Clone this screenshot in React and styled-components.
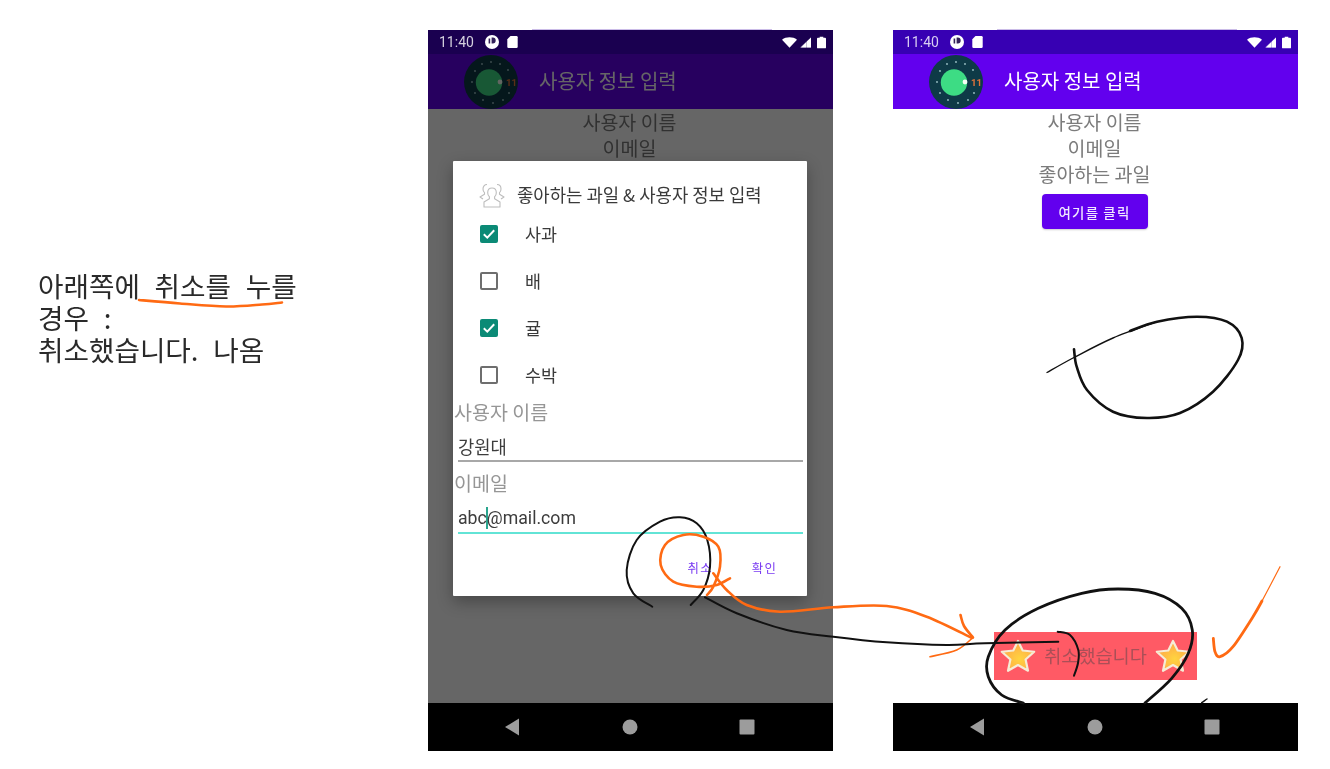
import React from 'react';
import styled, { createGlobalStyle } from 'styled-components';

const KR = '"Noto Sans CJK KR", "Noto Sans", sans-serif';

const Global = createGlobalStyle`
  html, body { margin: 0; background: #fff; overflow: hidden; }
  * { box-sizing: border-box; }
`;

const Page = styled.div`
  position: relative;
  display: flex;
  width: 1330px;
  height: 769px;
  padding-top: 30px;
  background: #fff;
  font-family: ${KR};
  filter: blur(0.55px);
`;

const Note = styled.div`
  width: 428px;
  padding: 239px 0 0 38px;
  font-size: 27.7px;
  line-height: 32px;
  word-spacing: 8.5px;
  color: #2a2a2a;
  font-weight: 400;
  white-space: nowrap;
`;

const PhoneRow = styled.div`
  display: flex;
  gap: 60px;
`;

const Phone = styled.section`
  position: relative;
  display: flex;
  flex-direction: column;
  width: 405px;
  height: 721px;
  &::before {
    content: '';
    position: absolute;
    top: -1px;
    left: 104px;
    width: 240px;
    height: 1px;
    background: #cbbce8;
  }
`;

const StatusBar = styled.header`
  display: flex;
  align-items: center;
  height: 24px;
  padding: 0 7px 0 11px;
  background: ${p => (p.$dim ? '#1a0050' : '#3700b3')};
  font-family: Roboto, sans-serif;
  font-size: 14px;
  color: ${p => (p.$dim ? '#d4d0de' : '#d8cdf2')};
`;

const StatusTime = styled.span`
  width: 38px;
`;

const StatusLeft = styled.div`
  display: flex;
  align-items: center;
  gap: 8px;
  flex: 1;
`;

const StatusRight = styled.div`
  display: flex;
  align-items: center;
  gap: 3px;
`;

const Screen = styled.div`
  position: relative;
  display: flex;
  flex-direction: column;
  flex: 1;
  background: #fff;
`;

const AppBar = styled.div`
  display: flex;
  align-items: center;
  gap: 22px;
  height: 55px;
  padding-left: 36px;
  background: #6200ee;
  color: #fff;
  font-size: 20px;
`;

const AppTitle = styled.span`
  margin: -2px 0 0 -1px;
`;

const LogoMark = styled.svg`
  flex: none;
`;

const BatteryGlyph = styled.svg`
  margin-left: 3px;
`;

const Content = styled.main`
  display: flex;
  flex-direction: column;
  align-items: center;
  flex: 1;
  padding-right: 2px;
`;

const Field = styled.div`
  height: 26px;
  font-size: 19.5px;
  line-height: 26px;
  color: #7c7c7c;
`;

const PrimaryButton = styled.button`
  width: 106px;
  height: 35px;
  margin-top: 7px;
  border: 0;
  border-radius: 4px;
  background: #6200ee;
  color: #f0e8ff;
  font-family: ${KR};
  font-size: 13.4px;
  font-weight: 500;
  letter-spacing: 1.2px;
  box-shadow: 0 1px 2px rgba(0, 0, 0, 0.2);
`;

const Toast = styled.div`
  display: flex;
  align-items: center;
  justify-content: space-between;
  width: 203px;
  height: 48px;
  margin: auto -2px 23px 0;
  padding: 0 6px;
  background: #ff5a65;
  color: #aa4f57;
  font-size: 18.6px;
`;

const ToastText = styled.span`
  margin-top: -3px;
`;

const Scrim = styled.div`
  position: absolute;
  inset: 0;
  padding: 107px 26px 0 25px;
  background: rgba(0, 0, 0, 0.6);
`;

const Dialog = styled.div`
  height: 435px;
  padding-top: 22px;
  background: #fff;
  box-shadow: 0 6px 16px rgba(0, 0, 0, 0.3);
  border-radius: 1px;
`;

const DialogTitle = styled.div`
  display: flex;
  align-items: center;
  gap: 12px;
  height: 24px;
  margin-bottom: 3px;
  padding-left: 26px;
  font-size: 17.8px;
  color: #3a3a3a;
  white-space: nowrap;
`;

const DialogTitleText = styled.span`
  margin-top: -3px;
`;

const CheckRow = styled.label`
  display: flex;
  align-items: center;
  gap: 27px;
  height: 47px;
  padding-left: 27px;
  font-size: 17.4px;
  color: #3a3a3a;
`;

const Box = styled.span`
  display: flex;
  align-items: center;
  justify-content: center;
  width: 18px;
  height: 18px;
  border-radius: 2px;
  background: ${p => (p.$on ? '#0b8a76' : '#fff')};
  border: ${p => (p.$on ? '0' : '2px solid #6e6e6e')};
`;

const InputLabel = styled.div`
  height: 26px;
  margin-top: 1px;
  padding-left: 1px;
  font-size: 19.5px;
  line-height: 26px;
  color: #969696;
`;

const Input = styled.div`
  display: flex;
  align-items: center;
  height: ${p => (p.$focus ? 38 : 37)}px;
  margin: 0 4px 8px 5px;
  padding-top: ${p => (p.$focus ? 7 : 6)}px;
  border-bottom: 2px solid ${p => (p.$focus ? '#62e4d6' : '#a8a8a8')};
  font-family: Roboto, ${KR};
  font-size: 17.7px;
  color: #3c3c3c;
`;

const Caret = styled.span`
  display: inline-block;
  width: 2px;
  height: 22px;
  margin: 0 -1px;
  background: #2aa58e;
`;

const DialogActions = styled.div`
  display: flex;
  justify-content: flex-end;
  align-items: center;
  gap: 39px;
  height: 24px;
  margin-top: 22px;
  padding-right: 30px;
  font-size: 12.4px;
  letter-spacing: 1.2px;
  color: #7a3cf2;
`;

const NavBar = styled.nav`
  position: relative;
  display: flex;
  align-items: center;
  justify-content: space-between;
  height: 48px;
  padding: 0 78px 0 76px;
  background: #000;
`;

const InkLayer = styled.svg`
  position: absolute;
  inset: 0;
  pointer-events: none;
`;

const spline = pts => {
  let d = `M${pts[0][0]} ${pts[0][1]}`;
  for (let i = 0; i < pts.length - 1; i++) {
    const a = pts[Math.max(i - 1, 0)];
    const b = pts[i];
    const c = pts[i + 1];
    const e = pts[Math.min(i + 2, pts.length - 1)];
    d += ` C${(b[0] + (c[0] - a[0]) / 6).toFixed(1)} ${(b[1] + (c[1] - a[1]) / 6).toFixed(1)} ${(c[0] - (e[0] - b[0]) / 6).toFixed(1)} ${(c[1] - (e[1] - b[1]) / 6).toFixed(1)} ${c[0]} ${c[1]}`;
  }
  return d;
};

const ORANGE = '#ff6a13';
const BLACK = '#111';

const strokes = [
  [ORANGE, 2.6, [[139, 300], [180, 303.5], [226, 306.5], [262, 304.5], [282, 302.5]]],
  [BLACK, 1.4, [[1047, 372.5], [1073, 358], [1113, 338], [1157, 321.7]]],
  [BLACK, 2.6, [[1130, 331], [1157, 321.7], [1197, 316.7], [1227, 321.7], [1241.7, 338], [1238, 360], [1213, 391.7], [1180, 413], [1147, 418], [1113, 411.7], [1087, 390], [1076.7, 366.7], [1074, 349.3]]],
  [BLACK, 2, [[652.3, 606.7], [633.3, 593.3], [626.7, 570], [636.7, 540], [660, 521.7], [680, 517.3], [696.7, 523.3], [707.3, 540], [710, 566.7], [703.3, 590], [690.7, 605]]],
  [ORANGE, 2.6, [[730, 578.3], [716.7, 585], [696.7, 586.7], [673.3, 581.7], [660.7, 565], [665, 545], [683.3, 535], [703.3, 536.7], [718.3, 546.7], [720, 566.7], [713.3, 586.7], [707, 595]]],
  [ORANGE, 2.6, [[713.3, 573.3], [726.7, 590], [746.7, 605], [780, 611.7], [833.3, 607.3], [886.7, 606], [926.7, 616.7], [972, 638]]],
  [ORANGE, 2.6, [[960.5, 615], [964, 626], [973, 637.5]]],
  [ORANGE, 1.6, [[973, 637.5], [956.7, 650], [930, 656.7]]],
  [BLACK, 2, [[705, 597.3], [736.7, 613.3], [786.7, 630], [833.3, 636.7], [886.7, 642.3], [946.7, 645], [985, 643.3], [1058.3, 641.7]]],
  [BLACK, 2, [[1057.7, 631.7], [1070, 635], [1078.3, 650], [1078, 663], [1074, 675.7]]],
  [BLACK, 2.8, [[1023.3, 703], [1001.7, 695], [988.3, 676.7], [988.3, 656.7], [1005, 630], [1038.3, 608.3], [1081.7, 593.3], [1118, 589], [1155, 593.3], [1181.7, 608.3], [1192.3, 630], [1188.3, 653.3], [1171.7, 678.3], [1145, 703]]],
  [BLACK, 1.4, [[1207, 699], [1201.7, 702.7]]],
  [ORANGE, 2.8, [[1213.3, 638.3], [1215, 651.7], [1220, 656.7], [1233, 646.7], [1253, 616.7], [1262, 601]]],
  [ORANGE, 1.2, [[1253, 616.7], [1262, 601], [1271, 584], [1280, 566.7]]],
];

const Ink = () => (
  <InkLayer width="1330" height="769" viewBox="0 0 1330 769" fill="none" strokeLinecap="round" strokeLinejoin="round">
    {strokes.map(([color, width, pts], i) => (
      <path key={i} d={spline(pts)} stroke={color} strokeWidth={width} />
    ))}
  </InkLayer>
);

const DialIcon = () => (
  <svg width="14" height="14" viewBox="0 0 14 14">
    <circle cx="7" cy="7" r="7" fill="#fff" />
    <path d="M6.6 2.6h1.2a2.9 2.9 0 0 1 0 5.8H6.6z M3.6 3.4h1.6v5H3.6z" fill="#33205a" />
  </svg>
);

const SdIcon = () => (
  <svg width="11" height="12" viewBox="0 0 11 12">
    <path d="M3.5 0H9.5a1.2 1.2 0 0 1 1.2 1.2V10.8A1.2 1.2 0 0 1 9.5 12H1.5A1.2 1.2 0 0 1 .3 10.8V3.2z" fill="#fff" />
  </svg>
);

const WifiIcon = () => (
  <svg width="15" height="11" viewBox="0 0 16 11">
    <path d="M0 2.5C4.5-.8 11.5-.8 16 2.5L8 11z" fill="#fff" />
  </svg>
);

const SignalIcon = () => (
  <svg width="11" height="11" viewBox="0 0 12 11">
    <path d="M12 0V11H0z" fill="#fff" fillOpacity="0.5" />
    <path d="M7.5 4.5V11H12V0z M7 5L1 11H7z" fill="#fff" />
  </svg>
);

const BatteryIcon = () => (
  <BatteryGlyph width="9" height="13" viewBox="0 0 10 13">
    <path d="M3 0H7V1.3H9a1 1 0 0 1 1 1V12a1 1 0 0 1-1 1H1a1 1 0 0 1-1-1V2.3a1 1 0 0 1 1-1H3z" fill="#fff" />
  </BatteryGlyph>
);

const dots = [[27, 7], [36, 9], [44, 15], [18, 9], [11, 16], [8, 27], [11, 38], [19, 45], [29, 48], [39, 45], [45, 38]];

const Logo = () => (
  <LogoMark width="54" height="54" viewBox="0 0 54 54">
    <circle cx="27" cy="27" r="27" fill="#0e3a47" />
    {dots.map(([x, y], i) => (
      <circle key={i} cx={x} cy={y} r="0.9" fill="#9fc4c8" />
    ))}
    <circle cx="25" cy="27.5" r="13.2" fill="#3ddc84" />
    <circle cx="36" cy="27" r="2.4" fill="#f4fff6" />
    <text x="42" y="30.500" fontFamily="Roboto, sans-serif" fontSize="9.500" fontWeight="700" fill="#e0733a">11</text>
  </LogoMark>
);

const PeopleIcon = () => (
  <svg width="26" height="25" viewBox="0 0 26 25" fill="none" stroke="#bdbdbd" strokeWidth="1.1" strokeLinejoin="round">
    <path d="M8 1.5c-2.6 0-4 2-4 4.4 0 1.6.6 3 1.5 3.8v1.6L1 14l3 2" />
    <path d="M18 1.5c2.6 0 4 2 4 4.4 0 1.6-.6 3-1.5 3.8v1.6L25 14l-3 2" />
    <path d="M13 5c-2.7 0-4.3 2.1-4.3 4.7 0 1.8.7 3.2 1.7 4v2L5 19v5h16v-5l-5.4-3.3v-2c1-.8 1.7-2.2 1.7-4C17.300 7.100 15.700 5 13 5z" />
  </svg>
);

const CheckMark = () => (
  <svg width="14" height="12" viewBox="0 0 14 12" fill="none">
    <path d="M1.800 6.200L5.300 9.600L12.200 2.300" stroke="#fff" strokeWidth="2" />
  </svg>
);

const Star = () => (
  <svg width="36" height="36" viewBox="0 0 36 36">
    <defs>
      <radialGradient id="starFill" cx="0.55" cy="0.6" r="0.6">
        <stop offset="0" stopColor="#ffd43f" />
        <stop offset="1" stopColor="#ffa64a" />
      </radialGradient>
    </defs>
    <path
      d="M18 3L22.700 12.500L34.200 13.750L25.600 21.500L28 32.750L18 27L8 32.750L10.400 21.500L1.800 13.750L13.300 12.500Z"
      fill="url(#starFill)"
      stroke="#f6ecd6"
      strokeWidth="2.200"
      strokeLinejoin="round"
    />
  </svg>
);

const NavIcons = () => (
  <>
    <svg width="16" height="18" viewBox="0 0 16 18"><path d="M15 0.500V17.500L1 9z" fill="#9c9c9c" /></svg>
    <svg width="16" height="16" viewBox="0 0 16 16"><circle cx="8" cy="8" r="7.500" fill="#9c9c9c" /></svg>
    <svg width="16" height="16" viewBox="0 0 16 16"><rect x="0.500" y="0.500" width="15" height="15" rx="1" fill="#9c9c9c" /></svg>
  </>
);

const fruits = [
  { name: '사과', on: true },
  { name: '배', on: false },
  { name: '귤', on: true },
  { name: '수박', on: false },
];

const PhoneFrame = ({ dim, fields, children, toast }) => (
  <Phone>
    <StatusBar $dim={dim}>
      <StatusLeft>
        <StatusTime>11:40</StatusTime>
        <DialIcon />
        <SdIcon />
      </StatusLeft>
      <StatusRight>
        <WifiIcon />
        <SignalIcon />
        <BatteryIcon />
      </StatusRight>
    </StatusBar>
    <Screen>
      <AppBar>
        <Logo />
        <AppTitle>사용자 정보 입력</AppTitle>
      </AppBar>
      <Content>
        {fields.map(f => <Field key={f}>{f}</Field>)}
        <PrimaryButton>여기를 클릭</PrimaryButton>
        {toast}
      </Content>
      {children}
    </Screen>
    <NavBar><NavIcons /></NavBar>
  </Phone>
);

const fields = ['사용자 이름', '이메일', '좋아하는 과일'];

export default function App() {
  return (
    <Page>
      <Global />
      <Note>
        아래쪽에 취소를 누를<br />
        경우 :<br />
        취소했습니다. 나옴
      </Note>
      <PhoneRow>
        <PhoneFrame dim fields={fields}>
          <Scrim>
            <Dialog>
              <DialogTitle>
                <PeopleIcon />
                <DialogTitleText>좋아하는 과일 &amp; 사용자 정보 입력</DialogTitleText>
              </DialogTitle>
              {fruits.map(f => (
                <CheckRow key={f.name}>
                  <Box $on={f.on}>{f.on && <CheckMark />}</Box>
                  <span>{f.name}</span>
                </CheckRow>
              ))}
              <InputLabel>사용자 이름</InputLabel>
              <Input>강원대</Input>
              <InputLabel>이메일</InputLabel>
              <Input $focus>abc<Caret />@mail.com</Input>
              <DialogActions>
                <span>취소</span>
                <span>확인</span>
              </DialogActions>
            </Dialog>
          </Scrim>
        </PhoneFrame>
        <PhoneFrame
          fields={fields}
          toast={
            <Toast>
              <Star />
              <ToastText>취소했습니다</ToastText>
              <Star />
            </Toast>
          }
        />
      </PhoneRow>
      <Ink />
    </Page>
  );
}
